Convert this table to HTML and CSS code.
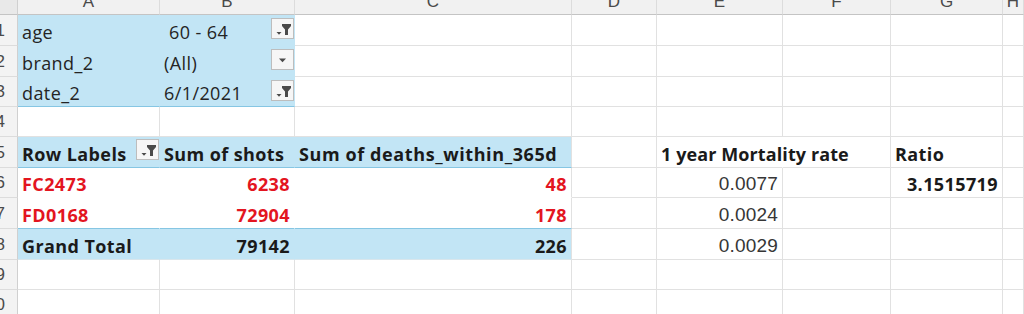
FILE: index.html
```html
<!DOCTYPE html>
<html lang="en">
<head>
    <meta charset="UTF-8">
    <meta name="viewport" content="width=device-width, initial-scale=1.0">
    <title>Mortality by batch</title>
    <link rel="stylesheet" href="styles.css">
</head>
<body>
    <div class="sheet">
        <!-- column letters -->
        <div class="corner"></div>
        <div class="colhead">A</div>
        <div class="colhead">B</div>
        <div class="colhead">C</div>
        <div class="colhead">D</div>
        <div class="colhead">E</div>
        <div class="colhead">F</div>
        <div class="colhead">G</div>
        <div class="colhead">H</div>

        <!-- report filters -->
        <div class="rowhead">1</div>
        <div class="cell filter">age</div>
        <div class="cell filter pick">&nbsp;60 - 64
            <span class="drop"><svg width="21" height="18" viewBox="0 0 21 18"><path d="M4.5 12h5l-2.5 2.8z"/><path d="M10 4h9v2l-3 3.5V15h-3V9.5L10 6z"/></svg></span>
        </div>
        <div class="cell"></div>
        <div class="cell"></div>
        <div class="cell"></div>
        <div class="cell"></div>
        <div class="cell"></div>
        <div class="cell"></div>

        <div class="rowhead">2</div>
        <div class="cell filter">brand_2</div>
        <div class="cell filter pick">(All)
            <span class="drop"><svg width="21" height="18" viewBox="0 0 21 18"><path d="M7 7.5h7l-3.5 3.8z"/></svg></span>
        </div>
        <div class="cell"></div>
        <div class="cell"></div>
        <div class="cell"></div>
        <div class="cell"></div>
        <div class="cell"></div>
        <div class="cell"></div>

        <div class="rowhead">3</div>
        <div class="cell filter last">date_2</div>
        <div class="cell filter pick last">6/1/2021
            <span class="drop"><svg width="21" height="18" viewBox="0 0 21 18"><path d="M4.5 12h5l-2.5 2.8z"/><path d="M10 4h9v2l-3 3.5V15h-3V9.5L10 6z"/></svg></span>
        </div>
        <div class="cell"></div>
        <div class="cell"></div>
        <div class="cell"></div>
        <div class="cell"></div>
        <div class="cell"></div>
        <div class="cell"></div>

        <div class="rowhead">4</div>
        <div class="cell"></div>
        <div class="cell"></div>
        <div class="cell"></div>
        <div class="cell"></div>
        <div class="cell"></div>
        <div class="cell"></div>
        <div class="cell"></div>
        <div class="cell"></div>

        <!-- pivot table -->
        <div class="rowhead">5</div>
        <div class="cell pv-head bold pick">Row Labels
            <span class="drop"><svg width="21" height="18" viewBox="0 0 21 18"><path d="M4.5 12h5l-2.5 2.8z"/><path d="M10 4h9v2l-3 3.5V15h-3V9.5L10 6z"/></svg></span>
        </div>
        <div class="cell pv-head bold">Sum of shots</div>
        <div class="cell pv-head pv-end bold">Sum of deaths_within_365d</div>
        <div class="cell"></div>
        <div class="cell bold spill">1 year Mortality rate</div>
        <div class="cell"></div>
        <div class="cell bold">Ratio</div>
        <div class="cell"></div>

        <div class="rowhead">6</div>
        <div class="cell pv-body bold red">FC2473</div>
        <div class="cell pv-body bold red num">6238</div>
        <div class="cell pv-body pv-end bold red num">48</div>
        <div class="cell"></div>
        <div class="cell num plain">0.0077</div>
        <div class="cell"></div>
        <div class="cell num bold">3.1515719</div>
        <div class="cell"></div>

        <div class="rowhead">7</div>
        <div class="cell pv-body pv-last bold red">FD0168</div>
        <div class="cell pv-body pv-last bold red num">72904</div>
        <div class="cell pv-body pv-last pv-end bold red num">178</div>
        <div class="cell"></div>
        <div class="cell num plain">0.0024</div>
        <div class="cell"></div>
        <div class="cell"></div>
        <div class="cell"></div>

        <div class="rowhead">8</div>
        <div class="cell pv-total bold">Grand Total</div>
        <div class="cell pv-total bold num">79142</div>
        <div class="cell pv-total pv-end bold num">226</div>
        <div class="cell"></div>
        <div class="cell num plain">0.0029</div>
        <div class="cell"></div>
        <div class="cell"></div>
        <div class="cell"></div>

        <div class="rowhead">9</div>
        <div class="cell"></div>
        <div class="cell"></div>
        <div class="cell"></div>
        <div class="cell"></div>
        <div class="cell"></div>
        <div class="cell"></div>
        <div class="cell"></div>
        <div class="cell"></div>

        <div class="rowhead">10</div>
        <div class="cell"></div>
        <div class="cell"></div>
        <div class="cell"></div>
        <div class="cell"></div>
        <div class="cell"></div>
        <div class="cell"></div>
        <div class="cell"></div>
        <div class="cell"></div>
    </div>
</body>
</html>
```

FILE: styles.css
```css
* {
    margin: 0;
    padding: 0;
    box-sizing: border-box;
}

body {
    font-family: "Open Sans", "Noto Sans", sans-serif;
    font-size: 18px;
    color: #242424;
    background: #fff;
    overflow: hidden;
}

.sheet {
    display: grid;
    grid-template-columns: 18px 142px 135px 277px 85px 126px 108px 112px 21px;
    grid-template-rows: 15px 31px 31px 30px 30px 31px 30px 31px 31px 30px 30px;
}

/* headers */
.corner {
    background: #e9e9e9;
    border-right: 1px solid #d0d0d0;
    border-bottom: 1px solid #c4c4c4;
}

.colhead {
    display: flex;
    align-items: flex-end;
    justify-content: center;
    padding-bottom: 4px;
    overflow: hidden;
    background: #f1f1f1;
    border-right: 1px solid #dcdcdc;
    border-bottom: 1px solid #c4c4c4;
    font-family: "Liberation Sans", Arial, sans-serif;
    font-size: 17px;
    line-height: 17px;
    color: #4a4a4a;
}

.rowhead {
    display: flex;
    align-items: flex-end;
    justify-content: flex-end;
    padding: 0 12px 5px 0;
    overflow: hidden;
    background: #f3f3f3;
    border-right: 1px solid #d0d0d0;
    border-bottom: 1px solid #dcdcdc;
    font-family: "Liberation Sans", Arial, sans-serif;
    font-size: 17px;
    line-height: 18px;
    color: #4a4a4a;
    white-space: nowrap;
}

/* cells */
.cell {
    display: flex;
    align-items: flex-end;
    padding: 0 4px 3px;
    line-height: 20px;
    letter-spacing: 0.4px;
    white-space: nowrap;
    border-right: 1px solid #e1e1e1;
    border-bottom: 1px solid #e1e1e1;
}

.num {
    justify-content: flex-end;
}

.bold {
    font-weight: 700;
    color: #1a1a1a;
}

.red {
    color: #e3151f;
}

.plain {
    font-family: "Liberation Sans", Arial, sans-serif;
    font-size: 19px;
    letter-spacing: 0.2px;
    color: #363636;
}

/* long header runs over into the next column */
.spill {
    letter-spacing: 0.1px;
    border-right-color: transparent;
}

/* report filter block */
.filter {
    background: #c2e5f5;
    border-right-color: #c2e5f5;
    border-bottom-color: #c2e5f5;
}

.filter.last {
    border-bottom-color: #86c6e3;
}

.pick {
    padding-right: 0;
}

.drop {
    align-self: flex-start;
    margin: 3px 0 0 auto;
    width: 23px;
    height: 21px;
    display: flex;
    align-items: center;
    justify-content: center;
    background: #f6f6f6;
    border: 1px solid #bdbdbd;
}

.drop svg {
    fill: #4a4a4a;
}

.pv-head .drop {
    margin-top: 2px;
}

/* pivot table */
.pv-head {
    background: #c2e5f5;
    border-right-color: #c2e5f5;
    border-bottom-color: #86c6e3;
}

.pv-head.pv-end {
    letter-spacing: 0.6px;
}

.pv-body {
    background: #fff;
    border-right-color: #fff;
    border-bottom-color: #fff;
}

.pv-body.pv-last {
    border-bottom-color: #86c6e3;
}

.pv-total {
    background: #c2e5f5;
    border-right-color: #c2e5f5;
    border-bottom-color: #d9e6ec;
}

.pv-end {
    border-right-color: #e1e1e1;
}
```
